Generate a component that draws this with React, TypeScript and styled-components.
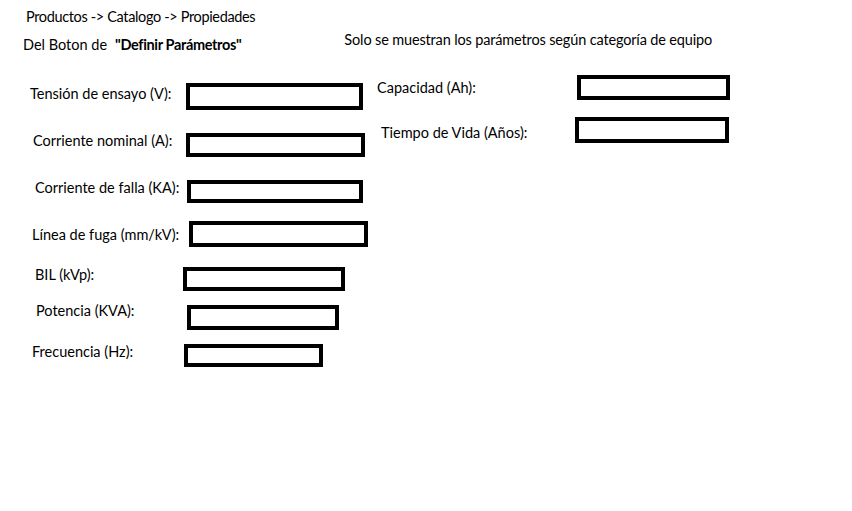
import React from "react";
import styled, { createGlobalStyle } from "styled-components";

const GlobalStyle = createGlobalStyle`
  html, body { margin: 0; padding: 0; background: #ffffff; }
  body {
    font-family: Lato, "Open Sans", "Liberation Sans", sans-serif;
    font-size: 14.5px;
    color: #000000;
  }
`;

const Page = styled.div`
  width: 852px;
  height: 511px;
  padding-top: 8px;
  box-sizing: border-box;
  overflow: hidden;
`;

const Crumb = styled.div`
  height: 18px;
  line-height: 18px;
  padding-left: 26px;
  letter-spacing: -0.35px;
  white-space: nowrap;
`;

const SubRow = styled.div`
  display: flex;
  align-items: flex-start;
  height: 28px;
`;

const Text = styled.span<{ $x: number; $top: number; $track?: number }>`
  display: block;
  line-height: 18px;
  margin-top: ${(p) => p.$top}px;
  padding-left: ${(p) => p.$x}px;
  letter-spacing: ${(p) => p.$track ?? 0}px;
  white-space: nowrap;
`;

const Gap = styled.span`
  display: inline-block;
  width: 8px;
`;

const Strong = styled.b`
  font-weight: 700;
  letter-spacing: -0.35px;
`;

const Body = styled.div`
  display: flex;
  align-items: flex-start;
`;

const Column = styled.div<{ $width?: number }>`
  display: flex;
  flex-direction: column;
  ${(p) => (p.$width ? `width: ${p.$width}px;` : "")}
`;

const Row = styled.div<{ $top: number; $fieldX: number }>`
  display: grid;
  grid-template-columns: ${(p) => p.$fieldX}px max-content;
  align-items: start;
  margin-top: ${(p) => p.$top}px;
`;

const Label = styled.label<{ $indent: number; $dy: number }>`
  display: block;
  line-height: 18px;
  padding-left: ${(p) => p.$indent}px;
  margin-top: ${(p) => p.$dy}px;
  white-space: nowrap;
`;

const Field = styled.div<{ $w: number; $h: number }>`
  width: ${(p) => p.$w}px;
  height: ${(p) => p.$h}px;
  box-sizing: border-box;
  border: 4px solid #000000;
  background: #ffffff;
`;

type FieldDef = {
  label: string;
  top: number;
  fieldX: number;
  indent: number;
  dy: number;
  w: number;
  h: number;
};

const left: FieldDef[] = [
  { label: "Tensión de ensayo (V):", top: 29, fieldX: 186, indent: 30, dy: 2, w: 177, h: 27 },
  { label: "Corriente nominal (A):", top: 23, fieldX: 186, indent: 33, dy: -1, w: 179, h: 24 },
  { label: "Corriente de falla (KA):", top: 23, fieldX: 187, indent: 35, dy: -1, w: 176, h: 23 },
  { label: "Línea de fuga (mm/kV):", top: 18, fieldX: 189, indent: 32, dy: 5, w: 179, h: 26 },
  { label: "BIL (kVp):", top: 20, fieldX: 183, indent: 35, dy: -1, w: 162, h: 24 },
  { label: "Potencia (KVA):", top: 14, fieldX: 187, indent: 36, dy: -3, w: 152, h: 25 },
  { label: "Frecuencia (Hz):", top: 14, fieldX: 184, indent: 32, dy: -1, w: 139, h: 23 },
];

const right: FieldDef[] = [
  { label: "Capacidad (Ah):", top: 21, fieldX: 200, indent: 0, dy: 4, w: 153, h: 25 },
  { label: "Tiempo de Vida (Años):", top: 17, fieldX: 198, indent: 4, dy: 7, w: 154, h: 26 },
];

const renderRow = (f: FieldDef) => (
  <Row key={f.label} $top={f.top} $fieldX={f.fieldX}>
    <Label $indent={f.indent} $dy={f.dy}>
      {f.label}
    </Label>
    <Field $w={f.w} $h={f.h} />
  </Row>
);

export default function App() {
  return (
    <>
      <GlobalStyle />
      <Page>
        <Crumb>Productos -&gt; Catalogo -&gt; Propiedades</Crumb>
        <SubRow>
          <Text $x={23} $top={10}>
            Del Boton de<Gap />
            <Strong>"Definir Parámetros"</Strong>
          </Text>
          <Text $x={103} $top={5} $track={-0.15}>
            Solo se muestran los parámetros según categoría de equipo
          </Text>
        </SubRow>
        <Body>
          <Column $width={377}>{left.map(renderRow)}</Column>
          <Column>{right.map(renderRow)}</Column>
        </Body>
      </Page>
    </>
  );
}
